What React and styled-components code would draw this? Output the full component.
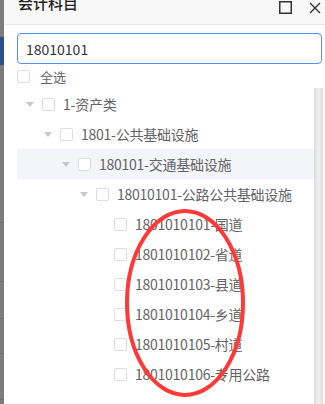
import React from 'react';
import styled, { createGlobalStyle } from 'styled-components';

const GlobalStyle = createGlobalStyle`
  html, body {
    margin: 0;
    padding: 0;
    background: #ffffff;
    overflow: hidden;
  }
  body {
    font-family: "Noto Sans CJK SC", "Noto Sans", sans-serif;
  }
`;

const Page = styled.div`
  position: relative;
  display: flex;
  width: 325px;
  height: 404px;
  overflow: hidden;
`;

const Backdrop = styled.div`
  width: 4px;
  flex: none;
  background: #7d7d7d;
  display: flex;
  flex-direction: column;
`;

const BackdropBlock = styled.div`
  height: ${p => p.h}px;
  flex: none;
  background: ${p => p.color || 'transparent'};
  border-bottom: ${p => (p.line ? '1px solid #6a6a6a' : 'none')};
`;

const Dialog = styled.div`
  flex: 1;
  min-width: 0;
  background: #ffffff;
  display: flex;
  flex-direction: column;
  margin-top: -16px;
`;

const Header = styled.div`
  height: 40px;
  flex: none;
  display: flex;
  align-items: center;
  padding: 0 3px 0 14px;
  background: #f8f8f9;
  border-bottom: 1px solid #e8eaec;
`;

const Title = styled.div`
  flex: 1;
  font-size: 15px;
  font-weight: 500;
  color: #1f1f1f;
  margin-top: -3px;
`;

const HeaderButton = styled.button`
  border: none;
  background: none;
  padding: 0;
  margin-left: ${p => p.gap || 0}px;
  width: 14px;
  height: 14px;
  display: flex;
  align-items: center;
  justify-content: center;
  color: #333;
  margin-top: ${p => p.dy || 0}px;
`;

const Body = styled.div`
  flex: 1;
  min-height: 0;
  display: flex;
  flex-direction: column;
  padding: 8px 3px 0 13px;
`;

const SearchInput = styled.input`
  box-sizing: border-box;
  width: 100%;
  height: 31px;
  border: 1px solid #5a8ef2;
  border-radius: 4px;
  padding: 0 8px;
  font-family: "Noto Sans CJK SC", "Noto Sans", sans-serif;
  font-size: 14px;
  color: #333;
  outline: none;
`;

const CheckAllRow = styled.label`
  height: 24px;
  display: flex;
  align-items: center;
  gap: 10px;
  font-size: 13px;
  color: #666;
`;

const Checkbox = styled.span`
  box-sizing: border-box;
  width: 13px;
  height: 13px;
  flex: none;
  border: 1px solid #dcdee2;
  border-radius: 2px;
  background: #fff;
`;

const TreeArea = styled.div`
  flex: 1;
  min-height: 0;
  display: flex;
  margin-right: -1px;
`;

const TreeList = styled.div`
  flex: 1;
  min-width: 0;
  padding-top: 1px;
`;

const Scrollbar = styled.div`
  width: 9px;
  flex: none;
  background: linear-gradient(to right, #dadada, #ededed 40%, #ededed 60%, #dadada);
`;

const Row = styled.div`
  height: 30px;
  display: flex;
  align-items: center;
  padding-left: ${p => 5 + p.level * 18}px;
  background: ${p => (p.active ? '#f4f5f9' : 'transparent')};
  font-size: 14px;
  letter-spacing: -0.25px;
  color: #636363;
  white-space: nowrap;
`;

const Arrow = styled.span`
  width: 16px;
  height: 16px;
  flex: none;
  display: flex;
  align-items: center;
  justify-content: center;
  margin-right: 4px;

  &::before {
    content: '';
    display: ${p => (p.leaf ? 'none' : 'block')};
    margin-top: 1px;
    border-left: 4px solid transparent;
    border-right: 4px solid transparent;
    border-top: 5px solid #c5c8ce;
  }
`;

const Label = styled.span`
  margin-left: 8px;
`;

const Annotation = styled.svg`
  position: absolute;
  left: 123px;
  top: 207px;
  pointer-events: none;
`;

const nodes = [
  { level: 0, text: '1-资产类' },
  { level: 1, text: '1801-公共基础设施' },
  { level: 2, text: '180101-交通基础设施', active: true },
  { level: 3, text: '18010101-公路公共基础设施' },
  { level: 4, text: '1801010101-国道', leaf: true },
  { level: 4, text: '1801010102-省道', leaf: true },
  { level: 4, text: '1801010103-县道', leaf: true },
  { level: 4, text: '1801010104-乡道', leaf: true },
  { level: 4, text: '1801010105-村道', leaf: true },
  { level: 4, text: '1801010106-专用公路', leaf: true },
];

const backdrop = [
  { h: 37 },
  { h: 28, color: '#2d4f8c' },
  { h: 157, line: true },
  { h: 58, line: true },
  { h: 36, line: true },
  { h: 34, line: true },
  { h: 45, line: true },
];

export default function App() {
  return (
    <>
      <GlobalStyle />
      <Page>
        <Backdrop>
          {backdrop.map((b, i) => (
            <BackdropBlock key={i} {...b} />
          ))}
        </Backdrop>
        <Dialog>
          <Header>
            <Title>会计科目</Title>
            <HeaderButton dy={6} aria-label="maximize">
              <svg width="13" height="13" viewBox="0 0 13 13">
                <rect x="0.75" y="0.75" width="11.5" height="11.5" fill="none" stroke="currentColor" strokeWidth="1.5" />
              </svg>
            </HeaderButton>
            <HeaderButton gap={16} dy={7} aria-label="close">
              <svg width="12" height="12" viewBox="0 0 12 12">
                <path d="M1 1 L11 11 M11 1 L1 11" stroke="currentColor" strokeWidth="1.4" />
              </svg>
            </HeaderButton>
          </Header>
          <Body>
            <SearchInput defaultValue="18010101" />
            <CheckAllRow>
              <Checkbox />
              全选
            </CheckAllRow>
            <TreeArea>
              <TreeList>
                {nodes.map(n => (
                  <Row key={n.text} level={n.level} active={n.active}>
                    <Arrow leaf={n.leaf} />
                    <Checkbox />
                    <Label>{n.text}</Label>
                  </Row>
                ))}
              </TreeList>
              <Scrollbar />
            </TreeArea>
          </Body>
        </Dialog>
        <Annotation width="126" height="194" viewBox="0 0 126 194">
          <ellipse cx="62" cy="96" rx="58" ry="92" fill="none" stroke="#ff3838" strokeWidth="4" />
        </Annotation>
      </Page>
    </>
  );
}
